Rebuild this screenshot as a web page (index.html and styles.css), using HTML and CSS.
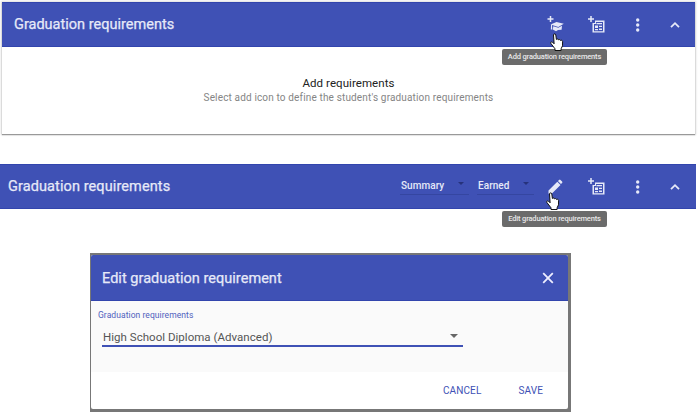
FILE: index.html
```html
<!DOCTYPE html>
<html lang="en">
<head>
<meta charset="utf-8">
<title>Graduation requirements</title>
<link rel="stylesheet" href="styles.css">
</head>
<body>
<svg class="defs" width="0" height="0">
  <symbol id="report" viewBox="0 0 26 26">
    <path d="M7 4v6M4 7h6" class="plus"/>
    <path fill-rule="evenodd" d="M11 8.500h9.500v12h-12v-9.500h2.500zM10 12v7.200h9v-9.200h-7v2z"/>
    <path d="M12.500 11h5.500v1.200h-5.500zM11 13.500h3v2.500h-3zM15 13.700h3v1.200h-3zM11 17h3v1.200h-3zM15 16.500h3v1.500h-3z"/>
  </symbol>
  <symbol id="dots" viewBox="0 0 26 26"><circle cx="12.700" cy="8" r="1.700"/><circle cx="12.700" cy="13" r="1.700"/><circle cx="12.700" cy="18" r="1.700"/></symbol>
  <symbol id="chevron" viewBox="0 0 26 26"><path class="line" d="M9 15.200l4-4 4 4"/></symbol>
  <symbol id="hand" viewBox="0 0 14 20">
    <path class="hand" d="M3.500 2c0-1.500 2.200-1.500 2.300 0l.6 4.500c.5-.8 2-.6 2.200.4.600-.6 1.900-.4 2 .6.700-.5 2-.2 2 1l-.1 4.300-1.400 3v1.700H5v-1.700L.9 10.500c-.8-1.300.7-2.200 1.700-1.200l1.500 1.500z"/>
  </symbol>
</svg>

<section class="panel">
  <header class="bar">
    <h2 class="title first">Graduation requirements</h2>
    <div class="actions">
      <span class="action add"><svg class="icon" viewBox="0 0 26 26">
        <path class="plus" d="M7.500 4v6M4.500 7h6"/>
        <path d="M7.500 12.500l6-2.500 7.300 1.700-5.500 3.300z M10.300 14.200l5 1.500 3.700-2 -.4 4-3.600.3-2 1.200-3.200-1.600z M8 13h1l.3 4.500h-1.500z"/></svg>
        <svg class="pointer"><use href="#hand"/></svg>
        <span class="tooltip">Add graduation requirements</span></span>
      <span class="action report"><svg class="icon"><use href="#report"/></svg></span>
      <span class="action more"><svg class="icon"><use href="#dots"/></svg></span>
      <span class="action collapse"><svg class="icon"><use href="#chevron"/></svg></span>
    </div>
  </header>
  <div class="empty">
    <h3 class="empty-title">Add requirements</h3>
    <p class="empty-text">Select add icon to define the student's graduation requirements</p>
  </div>
</section>

<header class="bar wide">
  <h2 class="title second">Graduation requirements</h2>
  <div class="actions">
    <span class="filter summary">Summary<i class="caret"></i></span>
    <span class="filter earned">Earned<i class="caret"></i></span>
    <span class="action add edit"><svg class="icon" viewBox="0 0 26 26"><path d="M5.500 16.500l8.800-8.800 3.200 3.200-8.800 8.800h-3.200zM14.900 7.100l1.200-1.200q.7-.6 1.400 0l1.600 1.600q.6.700 0 1.400l-1.200 1.200z"/></svg>
      <svg class="pointer"><use href="#hand"/></svg>
      <span class="tooltip">Edit graduation requirements</span></span>
    <span class="action report"><svg class="icon"><use href="#report"/></svg></span>
    <span class="action more"><svg class="icon"><use href="#dots"/></svg></span>
    <span class="action collapse"><svg class="icon"><use href="#chevron"/></svg></span>
  </div>
</header>

<div class="frame">
  <div class="dialog">
    <header class="dialog-head">
      <h2 class="dialog-title">Edit graduation requirement</h2>
      <svg class="close" viewBox="0 0 12 12"><path d="M1.200 1.200l9.600 9.600M10.800 1.200l-9.600 9.600"/></svg>
    </header>
    <div class="dialog-body">
      <div class="label">Graduation requirements</div>
      <div class="select"><span class="value">High School Diploma (Advanced)</span><i class="caret"></i></div>
    </div>
    <footer class="dialog-foot"><span>CANCEL</span><span>SAVE</span></footer>
  </div>
</div>
</body>
</html>
```
FILE: styles.css
```css
* { box-sizing: border-box; }
body { margin: 0; width: 700px; height: 417px; overflow: hidden; background: #fff; font-family: Roboto, sans-serif; }
h2, h3, p { margin: 0; font-weight: 400; }
.defs { position: absolute; }
.panel { margin: 2px 4px 0 2px; height: 132px; width: 693px; box-shadow: 0 1px 1px #999, 0 0 2px 1px #ddd; background: #fff; }
.bar { display: flex; align-items: center; justify-content: space-between; height: 45px; padding: 0 3px 0 12px; background: #3f51b5; color: #e6e9f8; box-shadow: inset 0 1px #3245ad, inset 0 -1px #3245ad; }
.wide { width: 696px; margin-top: 30px; padding: 0 4px 0 8px; }
.title { font-size: 14.5px; line-height: 20px; letter-spacing: .1px; white-space: nowrap; -webkit-text-stroke: .25px currentColor; }
.first { letter-spacing: .01px; }
.actions { display: flex; align-items: center; height: 45px; }
.action { position: relative; display: flex; align-items: center; justify-content: center; height: 45px; }
.add { width: 42px; }
.report { width: 40px; }
.more { width: 41px; }
.collapse { width: 34px; }
.icon { width: 26px; height: 26px; fill: #e6e9f8; flex: none; }
.plus { fill: none; stroke: #e6e9f8; stroke-width: 1.5; }
.line { fill: none; stroke: #e6e9f8; stroke-width: 1.8; }
.pointer { position: absolute; left: 15px; top: 31px; width: 14px; height: 20px; z-index: 2; }
.edit .pointer { left: 11px; top: 28px; }
.hand { fill: #fff; stroke: #111; stroke-width: 1; }
.tooltip { position: absolute; left: -33px; top: 47px; width: 105px; height: 16px; border-radius: 2px; background: #6b6b6b; color: #e8e8e8; font-size: 7.5px; font-weight: 500; letter-spacing: -.17px; line-height: 16px; text-align: center; white-space: nowrap; }
.empty { padding-top: 29px; text-align: center; }
.empty-title { font-size: 11.5px; letter-spacing: .07px; line-height: 14px; color: #222; }
.empty-text { font-size: 10px; letter-spacing: .15px; line-height: 15px; color: #858585; white-space: nowrap; }
.filter { display: flex; align-items: center; justify-content: space-between; height: 16px; border-bottom: 1px solid #3546a1; font-size: 10px; font-weight: 500; padding: 0 5px 2px 1px; letter-spacing: .05px; }
.summary { width: 69px; margin-right: 8px; }
.earned { width: 57px; margin-right: 1px; }
.caret { border: 3px solid transparent; border-top-color: #26327c; border-bottom: 0; }
.filter .caret { margin-top: -3px; }
.frame { width: 481px; height: 159px; margin: 44px 0 0 90px; padding: 2px 3px 3px 1px; background: #777; }
.dialog { height: 154px; border-radius: 2px; overflow: hidden; background: #fff; }
.dialog-head { display: flex; align-items: center; justify-content: space-between; height: 46px; padding: 0 14px 0 11px; background: #3f51b5; box-shadow: inset 0 -1px #3245ad; color: #e6e9f8; }
.dialog-title { font-size: 14.5px; letter-spacing: .03px; -webkit-text-stroke: .25px currentColor; }
.close { width: 12px; height: 12px; fill: none; stroke: #eef; stroke-width: 1.8; }
.dialog-body { height: 71px; padding: 7px 0 0 7px; background: #fafafa; }
.label { font-size: 8.5px; letter-spacing: .07px; line-height: 14px; color: #5061bd; }
.select { display: flex; align-items: center; justify-content: space-between; width: 361px; height: 20px; margin: 5px 0 0 4px; padding: 1px 5px 0 1px; border-bottom: 2px solid #3f51b5; font-size: 11.5px; letter-spacing: .03px; color: #555; }
.select .caret { border-width: 4px 4px 0; border-top-color: #666; margin-top: -2px; }
.dialog-foot { display: flex; align-items: center; justify-content: flex-end; gap: 37px; height: 37px; padding-right: 25px; font-size: 10px; letter-spacing: .12px; color: #4051b5; }
```
